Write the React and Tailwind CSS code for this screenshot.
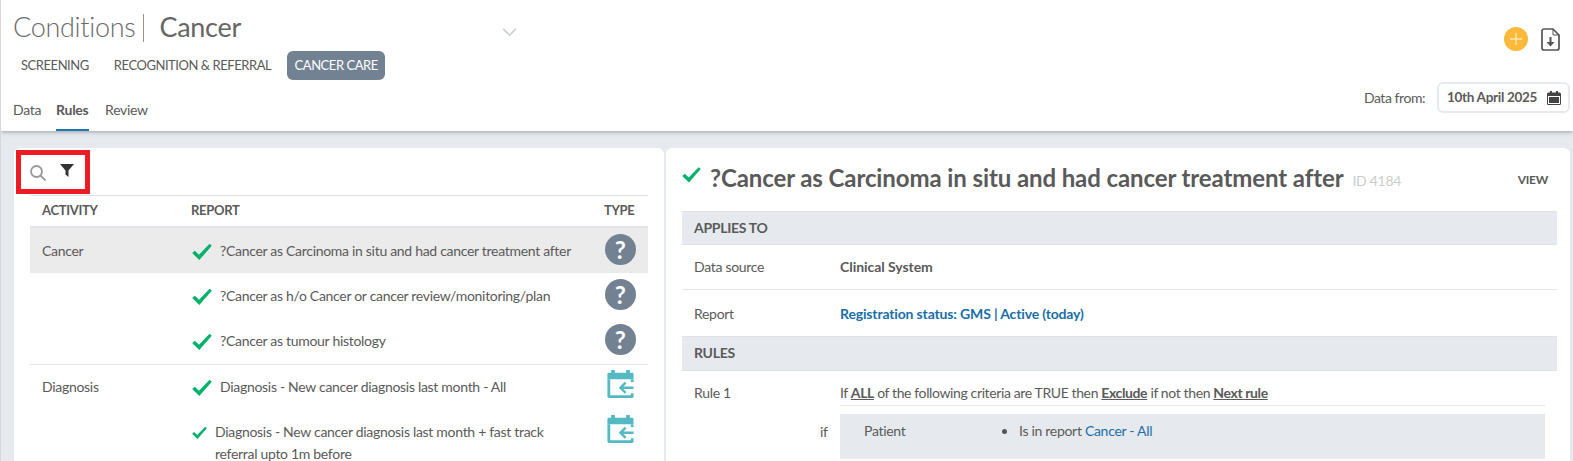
import React from "react";

const Check = ({ className }) => (
  <svg viewBox="0 0 20 17" className={className} fill="#00b16a">
    <path d="M0.2 9.6 L2.8 7.2 L7 11.2 L17.6 0.2 L19.8 2.2 L7.3 16.6 Z" />
  </svg>
);

const Question = () => (
  <div className="w-[31px] h-[31px] rounded-full bg-[#738293] flex items-center justify-center text-white text-[24px] font-bold leading-none">?</div>
);

const CalIcon = () => (
  <svg viewBox="0 0 28 30" className="w-[27px] h-[28px] -mt-[1px]">
    <path fill="#55b9c4" d="M4 0h4v3h12V0h4v3h2.500A1.500 1.500 0 0 1 28 4.500V10H0V4.500A1.500 1.500 0 0 1 1.500 3H4z" />
    <path fill="#55b9c4" d="M0 10h3v17h22v-2h3v3.500a1.500 1.500 0 0 1-1.500 1.500h-25A1.500 1.500 0 0 1 0 28.500z" />
    <path fill="#55b9c4" d="M25 10h3v3h-3z" />
    <path fill="none" stroke="#55b9c4" strokeWidth="2.600" d="M28 19H14M19.500 13.500L14 19l5.500 5.500" />
  </svg>
);

const Row = ({ activity, active, text, small, icon, border, h }) => (
  <div className={`flex ${h} ${active ? "bg-[#ebebeb]" : ""} ${border ? "border-t border-[#e3e5e8]" : ""}`}>
    <div className={`w-[161px] pl-[12px] leading-[18px] ${border ? "pt-[13px]" : "pt-[14px]"}`}>{activity}</div>
    <div className={`flex-1 flex items-start ${border ? "pt-[12px]" : "pt-[13px]"}`}>
      <Check className={small ? "w-[15px] h-[14px] mt-[3px] ml-[1px] mr-[8px]" : "w-[20px] h-[18px] mt-[2px] ml-[1px] mr-[8px]"} />
      <div className={small ? "w-[340px] leading-[22px] -mt-[2px]" : "leading-[20px]"}>{text}</div>
    </div>
    <div className="w-[59px] pt-[6px] pl-[3px] flex justify-center">{icon}</div>
  </div>
);

export default function App() {
  return (
    <div className="w-[1573px] h-[461px] overflow-hidden bg-[#e6eaee] text-[#5a5a5a] text-[14px] tracking-[-0.3px] border-l border-[#d5d8dc]" style={{ fontFamily: 'Lato, sans-serif' }}>
      <header className="h-[131px] bg-white shadow-[0_1px_4px_rgba(90,100,110,0.55)] relative flex justify-between">
        <div className="pl-[12px] pt-[9px]">
          <div className="flex items-center h-[36px]">
            <span className="text-[27px] font-light text-[#6b6b6b]">Conditions</span>
            <span className="w-px h-[28px] bg-[#a5917f] ml-[8px] mt-[2px]"></span>
            <span className="text-[27px] ml-[15px] text-[#666]">Cancer</span>
            <svg viewBox="0 0 16 10" className="w-[15px] h-[9px] ml-[261px] mt-[10px]" fill="none" stroke="#c9ced3" strokeWidth="1.800"><path d="M1 1l7 7 7-7" /></svg>
          </div>
          <div className="flex items-center h-[29px] mt-[6px] ml-[8px] text-[13px] tracking-[-0.45px]">
            <span>SCREENING</span>
            <span className="ml-[25px]">RECOGNITION &amp; REFERRAL</span>
            <span className="ml-[16px] w-[98px] h-[29px] flex items-center justify-center rounded-[6px] bg-[#738293] text-white">CANCER CARE</span>
          </div>
          <div className="flex mt-[20px] text-[14px] leading-[20px]">
            <span className="pb-[9px]">Data</span>
            <span className="ml-[15px] pb-[9px] font-bold border-b-2 border-[#1f78b4] w-[33px]">Rules</span>
            <span className="ml-[16px]">Review</span>
          </div>
        </div>
        <div className="pr-[3px] flex flex-col items-end">
          <div className="flex items-center mt-[27px] mr-[10px]">
            <div className="w-[24px] h-[24px] rounded-full bg-[#fdb93a] flex items-center justify-center mr-[13px]">
              <svg viewBox="0 0 12 12" className="w-[12px] h-[12px]" stroke="#ffe7b8" strokeWidth="1.300"><path d="M6 0v12M0 6h12" /></svg>
            </div>
            <svg viewBox="0 0 19 23" className="w-[19px] h-[23px]" fill="none" stroke="#555" strokeWidth="1.700">
              <path d="M3 1h9l6 6v13a2 2 0 0 1-2 2H3a2 2 0 0 1-2-2V3a2 2 0 0 1 2-2z" />
              <path d="M12 1v6h6" strokeWidth="1" />
              <path d="M9.500 9v7" strokeWidth="2" />
              <path fill="#555" stroke="none" d="M5.500 14h8l-4 4.500z" />
            </svg>
          </div>
          <div className="flex items-center mt-[31px]">
            <span className="mr-[12px] tracking-[-0.45px]">Data from:</span>
            <div className="w-[133px] h-[31px] border-2 border-[#e6eaee] rounded-[6px] flex items-center justify-between pl-[8px] pr-[7px] font-bold text-[13.500px]">
              <span>10th April 2025</span>
              <svg viewBox="0 0 14 14" className="w-[14px] h-[14px]" fill="#444"><path d="M3 0h2v1.500h4V0h2v1.500h1.500A1.500 1.500 0 0 1 14 3v9.500a1.500 1.500 0 0 1-1.500 1.500h-11A1.500 1.500 0 0 1 0 12.500V3a1.500 1.500 0 0 1 1.500-1.500H3zM1 5v8h12V5z" /><path d="M2 6h10v6H2z" /></svg>
            </div>
          </div>
        </div>
      </header>

      <main className="flex mt-[17px] pl-[13px] gap-[2px]">
        <section className="w-[650px] h-[400px] bg-white rounded-t-[6px] relative pl-[16px] pr-[16px]">
          <div className="h-[48px] flex items-start pt-[17px] border-b border-[#dfe2e5]">
            <svg viewBox="0 0 16 16" className="w-[16px] h-[16px]" fill="none" stroke="#999" strokeWidth="1.800"><circle cx="6.500" cy="6.500" r="5.500" /><path d="M10.500 10.500L15.500 15.500" /></svg>
            <svg viewBox="0 0 14 13" className="w-[14px] h-[13px] ml-[14px] -mt-[1px]" fill="#333"><path d="M0 0h14L8.500 6.500V13L5.500 10.500V6.500z" /></svg>
          </div>
          <div className="absolute left-[2px] top-[2px] w-[74px] h-[44px] border-[5px] border-[#ed1c24]"></div>
          <div className="flex h-[32px] items-center font-bold text-[13px] border-b-2 border-[#e3e5e8]">
            <span className="w-[161px] pl-[12px]">ACTIVITY</span>
            <span className="flex-1">REPORT</span>
            <span className="w-[44px]">TYPE</span>
          </div>
          <Row activity="Cancer" active h="h-[45px]" text="?Cancer as Carcinoma in situ and had cancer treatment after" icon={<Question />} />
          <Row h="h-[45px]" text="?Cancer as h/o Cancer or cancer review/monitoring/plan" icon={<Question />} />
          <Row h="h-[46px]" text="?Cancer as tumour histology" icon={<Question />} />
          <Row activity="Diagnosis" border h="h-[46px]" text="Diagnosis - New cancer diagnosis last month - All" icon={<CalIcon />} />
          <Row small h="h-[60px]" text="Diagnosis - New cancer diagnosis last month + fast track referral upto 1m before" icon={<CalIcon />} />
        </section>

        <section className="w-[904px] h-[400px] bg-white rounded-t-[6px] pl-[16px] pr-[13px]">
          <div className="h-[63px] flex items-start relative">
            <Check className="w-[19px] h-[16px] mt-[19px] mr-[9px]" />
            <span className="text-[24px] font-bold mt-[13px] leading-[34px] tracking-[-0.1px]">?Cancer as Carcinoma in situ and had cancer treatment after</span>
            <span className="text-[14px] text-[#ccc] ml-[9px] mt-[22px]">ID 4184</span>
            <span className="ml-auto mr-[9px] mt-[23px] text-[12px] font-bold">VIEW</span>
          </div>
          <div className="h-[34px] bg-[#e6eaee] border-y border-[#dfe3e7] pl-[12px] pb-[2px] flex items-center font-bold text-[14px]">APPLIES TO</div>
          <div className="flex h-[45px] pb-[2px] items-center border-b border-[#e3e5e8]">
            <span className="w-[158px] pl-[12px]">Data source</span><span className="font-bold tracking-[-0.05px]">Clinical System</span>
          </div>
          <div className="flex h-[46px] items-center">
            <span className="w-[158px] pl-[12px]">Report</span><span className="font-bold text-[#1a6ea8] tracking-[-0.15px]">Registration status: GMS | Active (today)</span>
          </div>
          <div className="h-[35px] bg-[#e6eaee] border-y border-[#dfe3e7] pl-[12px] pb-[2px] flex items-center font-bold text-[14px]">RULES</div>
          <div className="flex mt-[12px]">
            <span className="w-[158px] pl-[12px] leading-[20px]">Rule 1</span>
            <div className="flex-1 mr-[12px]">
              <div className="border-b border-[#e3e5e8] h-[23px] leading-[20px] tracking-[-0.38px]">
                If <b className="font-bold underline">ALL</b> of the following criteria are TRUE then <b className="font-bold underline">Exclude</b> if not then <b className="font-bold underline">Next rule</b>
              </div>
              <div className="relative mt-[8px] h-[45px] bg-[#e6eaee] flex items-start pt-[7px] leading-[20px] pl-[24px]">
                <span className="absolute -left-[20px] top-[8px]">if</span>
                <span className="w-[138px]">Patient</span>
                <span className="w-[5px] h-[5px] rounded-full bg-[#555] mt-[8px] mr-[12px]"></span>
                <span>Is in report <span className="text-[#1a6ea8]">Cancer - All</span></span>
              </div>
            </div>
          </div>
        </section>
      </main>
    </div>
  );
}
